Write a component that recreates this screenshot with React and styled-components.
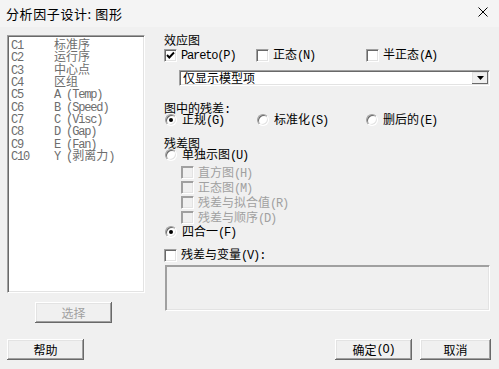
import React from 'react';
import styled, { createGlobalStyle } from 'styled-components';

const Global = createGlobalStyle`
  html, body { margin: 0; padding: 0; background: #f0f0f0; }
  body {
    width: 499px; height: 369px; overflow: hidden;
    font-family: "Noto Sans CJK SC", sans-serif;
    font-size: 12px; color: #000;
  }
`;

const Window = styled.div`
  width: 499px; height: 369px;
  display: flex; flex-direction: column;
  background: #f0f0f0;
`;

const TitleBar = styled.div`
  height: 27px; flex: none;
  display: flex; align-items: center; justify-content: space-between;
  padding: 0 11px 0 6px;
  background: #f4f4f4;
  font-size: 13px; letter-spacing: 0.6px; line-height: 27px;
`;

const CloseBtn = styled.div`
  width: 10px; height: 10px; display: flex; margin-top: -3px;
`;

const Main = styled.div`
  display: flex; padding: 8px 0 0 7px;
`;

const LeftCol = styled.div`
  width: 138px; display: flex; flex-direction: column;
`;

const ListBox = styled.div`
  height: 258px; box-sizing: border-box;
  background: #fff;
  border-top: 1px solid #a0a0a0; border-left: 1px solid #a0a0a0;
  border-right: 1px solid #fff; border-bottom: 1px solid #fff;
  box-shadow: inset 1px 1px 0 #696969, inset -1px -1px 0 #e3e3e3;
  padding: 2px 0 0 3px;
  color: #6d6d6d;
`;

const ListRow = styled.div`
  display: flex; height: 12.33px; line-height: 12.33px; white-space: nowrap;
`;

const ColId = styled.div` width: 43px; `;

const Button = styled.div`
  width: ${p => p.$w || 77}px; height: 21px; box-sizing: border-box;
  display: flex; align-items: center; justify-content: center;
  background: #f0f0f0;
  box-shadow: inset -1px -1px 0 #696969, inset 1px 1px 0 #fff,
              inset -2px -2px 0 #a0a0a0, inset 2px 2px 0 #e3e3e3;
  color: ${p => (p.$disabled ? '#a0a0a0' : '#000')};
  line-height: 21px;
  margin-left: ${p => p.$ml || 0}px;
  margin-top: ${p => p.$mt || 0}px;
`;

const RightCol = styled.div`
  width: 326px; margin-left: 19px;
  display: flex; flex-direction: column;
`;

const Label = styled.div`
  height: 12px; line-height: 12px; white-space: nowrap;
  margin-top: ${p => p.$mt || 0}px;
`;

const OptRow = styled.div`
  display: grid; grid-template-columns: 92px 110px auto;
  height: ${p => p.$h || 14}px; align-items: center;
  margin-top: ${p => p.$mt || 0}px;
  margin-left: ${p => p.$ml || 0}px;
`;

const Item = styled.div`
  display: flex; align-items: center; gap: ${p => p.$gap ?? 3}px;
  white-space: nowrap; line-height: 12px; height: 12px;
  color: ${p => (p.$disabled ? '#a0a0a0' : '#000')};
  margin-left: ${p => p.$ml || 0}px;
`;

const Box = styled.div`
  width: 13px; height: 13px; box-sizing: border-box; flex: none;
  display: flex; align-items: center; justify-content: center;
  background: ${p => (p.$disabled ? '#f0f0f0' : '#fff')};
  border-top: 1px solid #a0a0a0; border-left: 1px solid #a0a0a0;
  border-right: 1px solid #fff; border-bottom: 1px solid #fff;
  box-shadow: inset 1px 1px 0 ${p => (p.$disabled ? '#a0a0a0' : '#696969')},
              inset -1px -1px 0 #e3e3e3;
`;

const Radio = styled.div`
  width: 12px; height: 12px; box-sizing: border-box; flex: none;
  border-radius: 50%;
  border: 1px solid; border-color: #a0a0a0 #fff #fff #a0a0a0;
  background: #fff;
  display: flex; align-items: center; justify-content: center;
  box-shadow: inset 1px 1px 0 #696969, inset -1px -1px 0 #e3e3e3;
`;

const Dot = styled.div`
  width: 4px; height: 4px; border-radius: 50%; background: #000;
`;

const SubGroup = styled.div`
  display: flex; flex-direction: column; margin: 4px 0 0 17px;
`;

const SubRow = styled.div`
  height: 15px; display: flex; align-items: center;
`;

const Combo = styled.div`
  margin: 8px 0 0 15px; width: 311px; height: 16px; box-sizing: border-box;
  background: #fff; display: flex; align-items: stretch;
  border-top: 1px solid #a0a0a0; border-left: 1px solid #a0a0a0;
  border-right: 1px solid #fff; border-bottom: 1px solid #fff;
  box-shadow: inset 1px 1px 0 #696969, inset -1px -1px 0 #e3e3e3;
`;

const ComboText = styled.div`
  flex: 1; padding-left: 3px; line-height: 14px; white-space: nowrap;
`;

const ComboArrow = styled.div`
  width: 16px; margin: 1px 1px 1px 0; box-sizing: border-box;
  background: #f0f0f0;
  box-shadow: inset -1px -1px 0 #696969, inset 1px 1px 0 #e3e3e3;
  display: flex; align-items: center; justify-content: center;
`;

const EditBox = styled.div`
  margin: 3px 0 0 1px; width: 325px; height: 46px; box-sizing: border-box;
  background: #f0f0f0;
  border-top: 1px solid #a0a0a0; border-left: 1px solid #a0a0a0;
  border-right: 1px solid #fff; border-bottom: 1px solid #fff;
  box-shadow: inset 1px 1px 0 #a0a0a0, inset -1px -1px 0 #e3e3e3;
`;

const Footer = styled.div`
  margin-top: auto; display: flex; gap: 8px;
  padding: 0 8px 9px 7px;
`;

const Spacer = styled.div` flex: 1; `;

const Latin = styled.span`
  font-family: "Liberation Mono", monospace;
  font-size: 12px; letter-spacing: -1.15px; line-height: 1;
  vertical-align: 0.5px;
`;

function T({ children }) {
  const parts = String(children).split(/([\x00-\x7f]+)/);
  return parts.map((p, i) =>
    p === '' ? null : /^[\x00-\x7f]+$/.test(p)
      ? <Latin key={i}>{p}</Latin>
      : <React.Fragment key={i}>{p}</React.Fragment>
  );
}

const Check = () => (
  <svg width="9" height="9" viewBox="0 0 9 9">
    <path d="M1 4 L3.3 6.5 L8 1.5" fill="none" stroke="#000" strokeWidth="1.9" />
  </svg>
);

function CheckItem({ label, checked, disabled, ml }) {
  return (
    <Item $disabled={disabled} $ml={ml} $gap={4}>
      <Box $disabled={disabled}>{checked && <Check />}</Box>
      <span><T>{label}</T></span>
    </Item>
  );
}

function RadioItem({ label, checked, ml }) {
  return (
    <Item $ml={ml} $gap={5}>
      <Radio>{checked && <Dot />}</Radio>
      <span><T>{label}</T></span>
    </Item>
  );
}

const columns = [
  ['C1', '标准序'], ['C2', '运行序'], ['C3', '中心点'], ['C4', '区组'],
  ['C5', 'A (Temp)'], ['C6', 'B (Speed)'], ['C7', 'C (Visc)'],
  ['C8', 'D (Gap)'], ['C9', 'E (Fan)'], ['C10', 'Y (剥离力)'],
];

export default function App() {
  return (
    <Window>
      <Global />
      <TitleBar>
        <span>分析因子设计: 图形</span>
        <CloseBtn>
          <svg width="10" height="10" viewBox="0 0 10 10">
            <path d="M0.5 0.5 L9.5 9.5 M9.5 0.5 L0.5 9.5" stroke="#000" strokeWidth="1" />
          </svg>
        </CloseBtn>
      </TitleBar>
      <Main>
        <LeftCol>
          <ListBox>
            {columns.map(([id, name]) => (
              <ListRow key={id}>
                <ColId><T>{id}</T></ColId>
                <div><T>{name}</T></div>
              </ListRow>
            ))}
          </ListBox>
          <Button $disabled $ml={28} $mt={9}>选择</Button>
        </LeftCol>
        <RightCol>
          <Label $mt={-1}>效应图</Label>
          <OptRow $mt={2}>
            <CheckItem label="Pareto(P)" checked />
            <CheckItem label="正态(N)" />
            <CheckItem label="半正态(A)" />
          </OptRow>
          <Combo>
            <ComboText>仅显示模型项</ComboText>
            <ComboArrow>
              <svg width="7" height="4" viewBox="0 0 7 4">
                <path d="M0 0 H7 L3.5 4 Z" fill="#000" />
              </svg>
            </ComboArrow>
          </Combo>
          <Label $mt={16}><T>图中的残差:</T></Label>
          <OptRow $h={12}>
            <RadioItem label="正规(G)" checked ml={1} />
            <RadioItem label="标准化(S)" ml={1} />
            <RadioItem label="删后的(E)" />
          </OptRow>
          <Label $mt={11}>残差图</Label>
          <OptRow $h={12}>
            <RadioItem label="单独示图(U)" ml={1} />
          </OptRow>
          <SubGroup>
            {['直方图(H)', '正态图(M)', '残差与拟合值(R)', '残差与顺序(D)'].map(l => (
              <SubRow key={l}><CheckItem label={l} disabled /></SubRow>
            ))}
          </SubGroup>
          <OptRow $h={12} $mt={1}>
            <RadioItem label="四合一(F)" checked ml={1} />
          </OptRow>
          <OptRow $mt={10}>
            <CheckItem label="残差与变量(V):" />
          </OptRow>
          <EditBox />
        </RightCol>
      </Main>
      <Footer>
        <Button>帮助</Button>
        <Spacer />
        <Button><T>确定(O)</T></Button>
        <Button $w={71}>取消</Button>
      </Footer>
    </Window>
  );
}
